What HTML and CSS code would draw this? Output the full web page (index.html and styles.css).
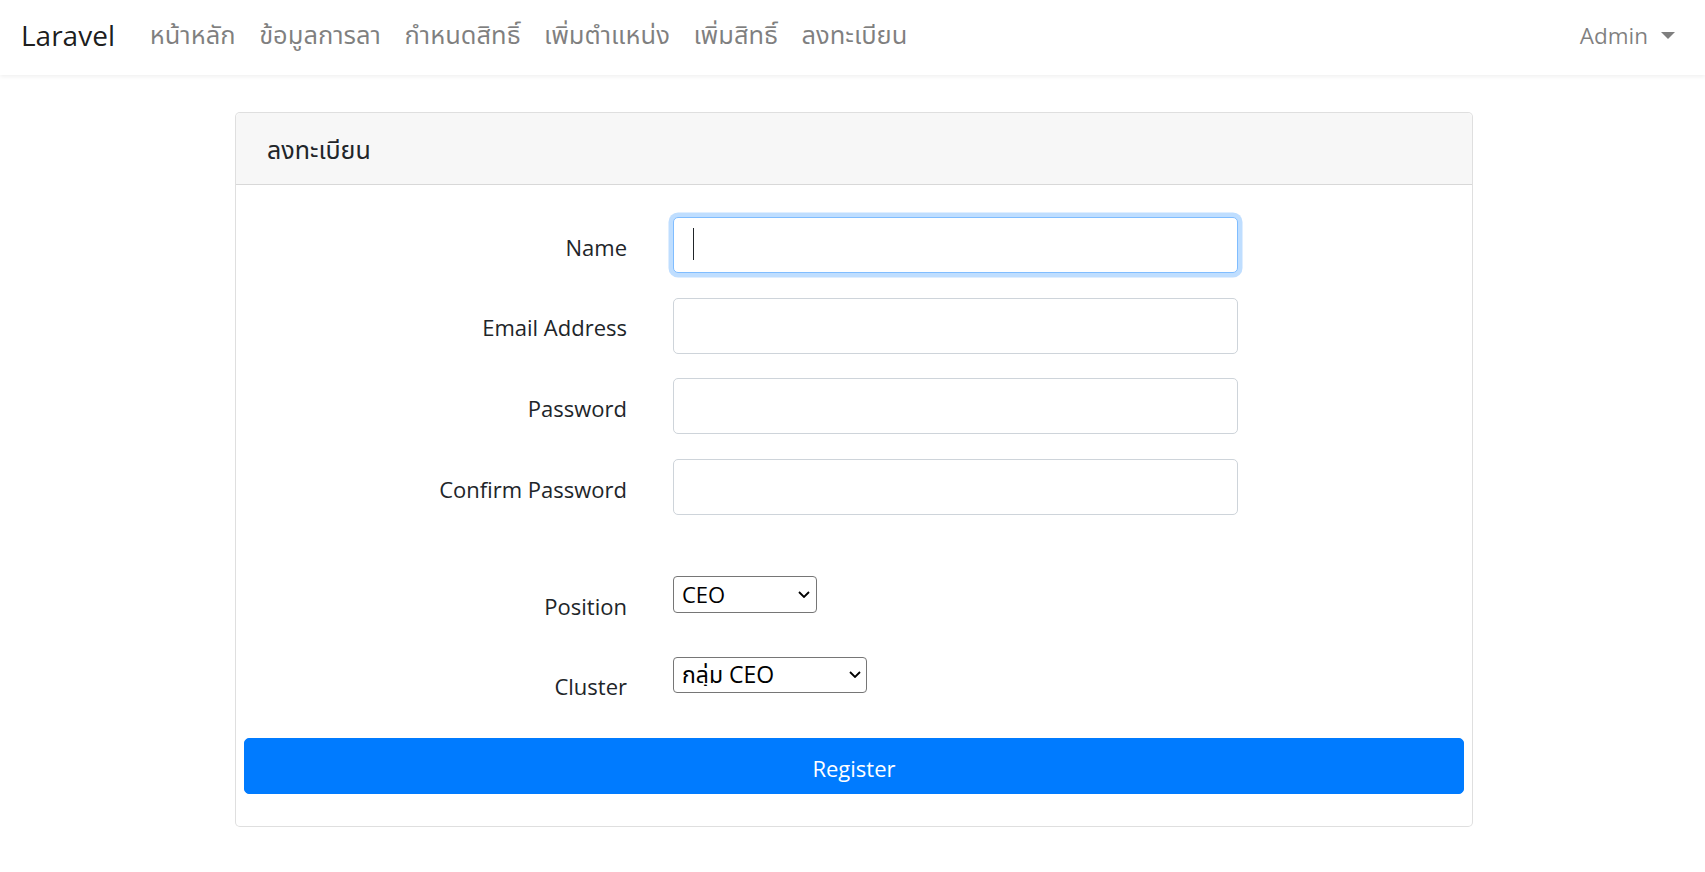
FILE: index.html
```html
<!DOCTYPE html>
<html lang="th">
<head>
<meta charset="utf-8">
<title>Register</title>
<link rel="stylesheet" href="styles.css">
</head>
<body>
<nav class="navbar">
  <a class="brand" href="#">Laravel</a>
  <ul class="nav-links">
    <li><a href="#">หน้าหลัก</a></li>
    <li><a href="#">ข้อมูลการลา</a></li>
    <li><a href="#">กำหนดสิทธิ์</a></li>
    <li><a href="#">เพิ่มตำแหน่ง</a></li>
    <li><a href="#">เพิ่มสิทธิ์</a></li>
    <li><a href="#">ลงทะเบียน</a></li>
  </ul>
  <a class="user-menu" href="#">Admin <span class="caret"></span></a>
</nav>

<main class="container">
  <div class="card">
    <div class="card-header">ลงทะเบียน</div>
    <form class="card-body">
      <div class="row">
        <label class="row-label" for="name">Name</label>
        <div class="input-wrap is-focused">
          <input class="form-control" id="name" type="text">
        </div>
      </div>
      <div class="row">
        <label class="row-label" for="email">Email Address</label>
        <div class="input-wrap">
          <input class="form-control" id="email" type="email">
        </div>
      </div>
      <div class="row">
        <label class="row-label" for="password">Password</label>
        <div class="input-wrap">
          <input class="form-control" id="password" type="password">
        </div>
      </div>
      <div class="row">
        <label class="row-label" for="confirm">Confirm Password</label>
        <div class="input-wrap">
          <input class="form-control" id="confirm" type="password">
        </div>
      </div>
      <div class="row row-select row-spaced">
        <label class="row-label" for="position">Position</label>
        <div class="select-wrap select-position">
          <select id="position"><option>CEO</option></select>
          <svg class="chev" width="12" height="7" viewBox="0 0 12 7"><path d="M1 1l5 5 5-5" fill="none" stroke="#000" stroke-width="1.8"/></svg>
        </div>
      </div>
      <div class="row row-select">
        <label class="row-label" for="cluster">Cluster</label>
        <div class="select-wrap select-cluster">
          <select id="cluster"><option>กลุ่ม CEO</option></select>
          <svg class="chev" width="12" height="7" viewBox="0 0 12 7"><path d="M1 1l5 5 5-5" fill="none" stroke="#000" stroke-width="1.8"/></svg>
        </div>
      </div>
      <button class="btn-primary" type="button">Register</button>
    </form>
  </div>
</main>
</body>
</html>
```

FILE: styles.css
```css
* { box-sizing: border-box; }

html, body {
  margin: 0;
  padding: 0;
  background: #fff;
}

body {
  font-family: "Open Sans", "Noto Sans Thai", "Noto Sans", "DejaVu Sans", sans-serif;
  font-size: 22px;
  color: #212529;
}

a { text-decoration: none; }

.navbar {
  height: 75px;
  display: flex;
  align-items: center;
  padding: 0 30px 4px 21px;
  background: #fff;
  box-shadow: 0 2px 4px rgba(0, 0, 0, 0.06);
  position: relative;
}

.brand {
  font-size: 28px;
  color: rgba(0, 0, 0, 0.9);
  margin-right: 23px;
  padding-bottom: 2px;
}

.nav-links {
  display: flex;
  list-style: none;
  margin: 0;
  padding: 0;
}

.nav-links a {
  display: block;
  padding: 0 11.8px;
  color: rgba(0, 0, 0, 0.5);
  font-size: 25.5px;
}

.user-menu {
  margin-left: auto;
  display: flex;
  align-items: center;
  color: rgba(0, 0, 0, 0.5);
  font-size: 22.5px;
}

.caret {
  display: inline-block;
  margin-left: 13px;
  width: 0;
  height: 0;
  border-left: 7.5px solid transparent;
  border-right: 7.5px solid transparent;
  border-top: 7px solid rgba(0, 0, 0, 0.5);
}

.container {
  width: 1238px;
  margin: 37px 0 0 235px;
}

.card {
  border: 1px solid rgba(0, 0, 0, 0.125);
  border-radius: 5px;
  background: #fff;
}

.card-header {
  height: 72px;
  display: flex;
  align-items: center;
  padding: 5px 31px 0;
  background: #f7f7f7;
  border-bottom: 1px solid rgba(0, 0, 0, 0.125);
  border-radius: 5px 5px 0 0;
  font-size: 25px;
  color: #212529;
}

.card-body {
  display: flex;
  flex-direction: column;
  gap: 24.7px;
  padding: 32px 8px 32px;
  margin: 0;
}

.row {
  display: grid;
  grid-template-columns: 383px 565px;
  column-gap: 46px;
  min-height: 56px;
}

.row-spaced { margin-top: 36.2px; }

.row-label {
  align-self: center;
  text-align: right;
  padding-top: 4px;
  color: #212529;
  line-height: 1.3;
}

.input-wrap {
  position: relative;
}

.form-control {
  display: block;
  width: 100%;
  height: 56px;
  border: 1px solid #ced4da;
  border-radius: 5px;
  background: #fff;
  font: inherit;
  padding: 0 16px;
  outline: none;
  caret-color: transparent;
}

.is-focused .form-control {
  border-color: #80bdff;
  box-shadow: 0 0 0 4.5px rgba(0, 123, 255, 0.25);
}

.is-focused::after {
  content: "";
  position: absolute;
  left: 20px;
  top: 11px;
  width: 1px;
  height: 32px;
  background: #212529;
}

.select-wrap {
  position: relative;
  align-self: start;
  justify-self: start;
}

.select-wrap select {
  display: block;
  appearance: none;
  -webkit-appearance: none;
  font-family: "Open Sans", "Noto Sans Thai", "Noto Sans", "DejaVu Sans", sans-serif;
  font-size: 22px;
  color: #000;
  background: #fff;
  border: 1px solid #767676;
  border-radius: 4px;
  padding: 0 0 0 8px;
  line-height: 1;
  outline: none;
}

.select-position select {
  width: 144px;
  height: 37px;
}

.select-cluster select {
  width: 194px;
  height: 36px;
  font-size: 23px;
}

.chev {
  position: absolute;
  right: 7px;
  top: 15px;
  pointer-events: none;
}

.select-cluster .chev { right: 6px; top: 14px; }

.btn-primary {
  display: block;
  width: 100%;
  height: 56px;
  margin-top: 1px;
  border: 1px solid #007bff;
  border-radius: 5px;
  background: #007bff;
  color: #fff;
  font-family: inherit;
  font-size: 22px;
  padding: 4px 0 0;
  cursor: pointer;
}
```
